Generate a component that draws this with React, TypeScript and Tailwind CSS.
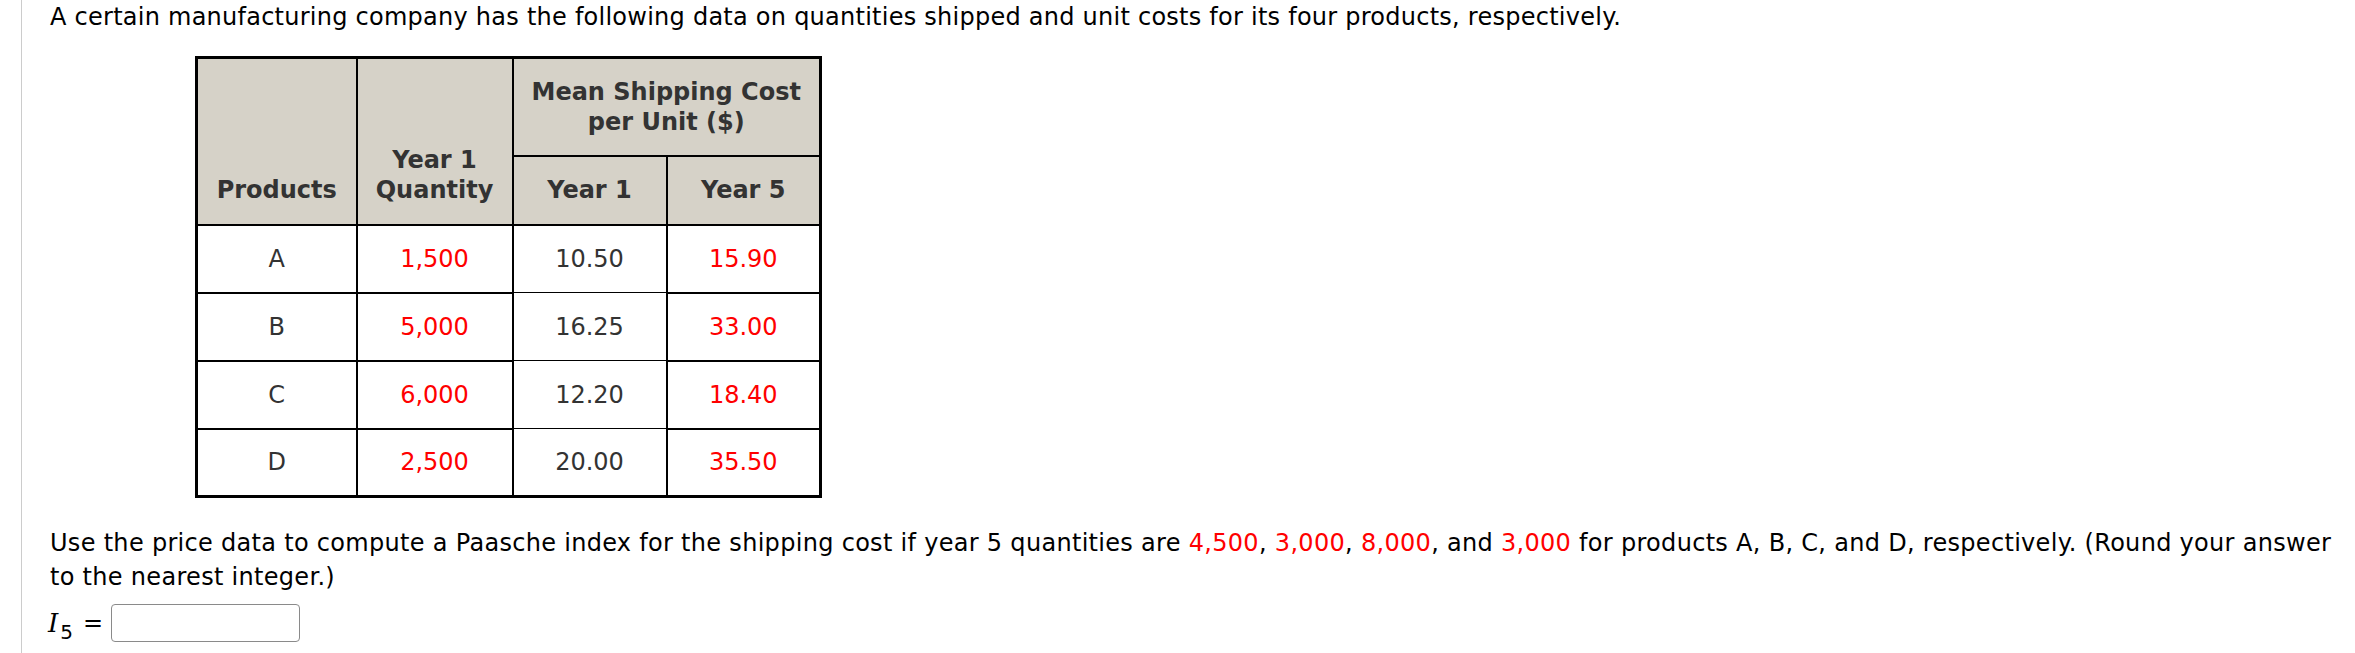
const rows = [
  { product: "A", quantity: "1,500", year1: "10.50", year5: "15.90" },
  { product: "B", quantity: "5,000", year1: "16.25", year5: "33.00" },
  { product: "C", quantity: "6,000", year1: "12.20", year5: "18.40" },
  { product: "D", quantity: "2,500", year1: "20.00", year5: "35.50" },
];

const Red = ({ children }: { children: React.ReactNode }) => (
  <span className="text-[#ff0000]">{children}</span>
);

export default function App() {
  return (
    <div className="h-[653px] w-[2355px] bg-white font-['DejaVu_Sans',Verdana,sans-serif] text-[24px] leading-[34px] text-black">
      <div className="ml-[21px] h-full border-l border-[#cccccc] pl-[28px]">
        <p className="tracking-[0.25px]">
          A certain manufacturing company has the following data on quantities
          shipped and unit costs for its four products, respectively.
        </p>

        <table className="mt-[22px] ml-[145px] table-fixed border-collapse border-[3px] border-black text-[#333333]">
          <colgroup>
            <col className="w-[160px]" />
            <col className="w-[156px]" />
            <col className="w-[154px]" />
            <col className="w-[154px]" />
          </colgroup>
          <thead className="bg-[#d6d2c8] font-bold leading-[30px]">
            <tr className="h-[98px]">
              <th rowSpan={2} className="border-[2px] border-black pb-[19px] align-bottom">
                Products
              </th>
              <th rowSpan={2} className="border-[2px] border-black pb-[19px] align-bottom">
                Year 1
                <br />
                Quantity
              </th>
              <th colSpan={2} className="border-[2px] border-black align-middle">
                Mean Shipping Cost
                <br />
                per Unit ($)
              </th>
            </tr>
            <tr className="h-[69px]">
              <th className="border-[2px] border-black align-middle">Year 1</th>
              <th className="border-[2px] border-black align-middle">Year 5</th>
            </tr>
          </thead>
          <tbody className="text-center">
            {rows.map((row) => (
              <tr key={row.product} className="h-[68px]">
                <td className="border-[2px] border-black">{row.product}</td>
                <td className="border-[2px] border-black text-[#ff0000]">{row.quantity}</td>
                <td className="border-[1px] border-black">{row.year1}</td>
                <td className="border-[2px] border-black text-[#ff0000]">{row.year5}</td>
              </tr>
            ))}
          </tbody>
        </table>

        <p className="mt-[28px] tracking-[0.3px]">
          Use the price data to compute a Paasche index for the shipping cost if
          year 5 quantities are <Red>4,500</Red>, <Red>3,000</Red>,{" "}
          <Red>8,000</Red>, and <Red>3,000</Red> for products A, B, C, and D,
          respectively. (Round your answer
          <br />
          to the nearest integer.)
        </p>

        <div className="mt-[10px] flex items-center">
          <span className="-ml-[2px] font-['DejaVu_Serif',serif] text-[26px] italic leading-none">
            I
          </span>
          <span className="relative top-[9px] ml-[2px] text-[20px] leading-none">5</span>
          <span className="ml-[10px] text-[24px] leading-none">=</span>
          <input
            type="text"
            className="ml-[8px] h-[38px] w-[189px] rounded-[4px] border-[1.5px] border-[#8a8a8a] bg-white"
          />
        </div>
      </div>
    </div>
  );
}
